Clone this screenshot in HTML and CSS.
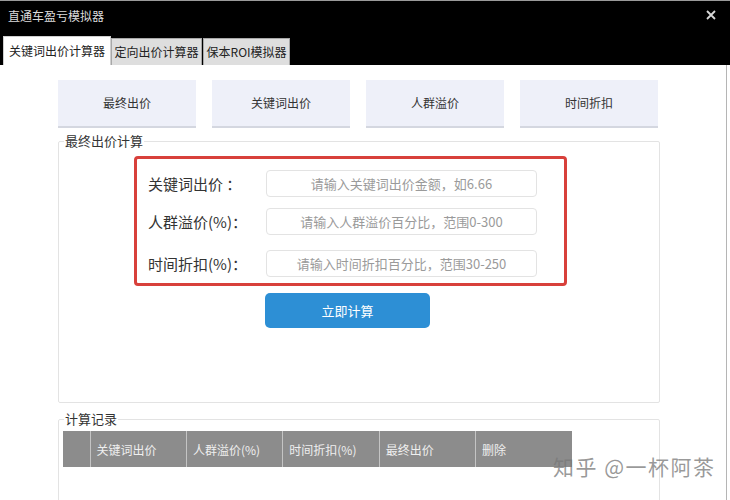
FILE: index.html
```html
<!DOCTYPE html>
<html lang="zh-CN">
<head>
  <meta charset="UTF-8">
  <title>直通车盈亏模拟器</title>
  <link rel="stylesheet" href="styles.css">
</head>
<body>
  <div class="window">
    <div class="titlebar">
      <div class="title-row">
        <span class="title">直通车盈亏模拟器</span>
        <svg class="close" width="10" height="10" viewBox="0 0 10 10">
          <path d="M1 1 L9 9 M9 1 L1 9" stroke="#d8d8d8" stroke-width="1.8"/>
        </svg>
      </div>
      <div class="tabs">
        <div class="tab active">关键词出价计算器</div>
        <div class="tab">定向出价计算器</div>
        <div class="tab">保本ROI模拟器</div>
      </div>
    </div>

    <div class="content">
      <div class="nav">
        <div class="nav-btn">最终出价</div>
        <div class="nav-btn">关键词出价</div>
        <div class="nav-btn">人群溢价</div>
        <div class="nav-btn">时间折扣</div>
      </div>

      <fieldset class="panel calc-panel">
        <legend>最终出价计算</legend>
        <div class="form-box">
          <div class="form-row">
            <label>关键词出价 ：</label>
            <input type="text" placeholder="请输入关键词出价金额，如6.66">
          </div>
          <div class="form-row">
            <label>人群溢价(%)：</label>
            <input type="text" placeholder="请输入人群溢价百分比，范围0-300">
          </div>
          <div class="form-row last">
            <label>时间折扣(%)：</label>
            <input type="text" placeholder="请输入时间折扣百分比，范围30-250">
          </div>
        </div>
        <button class="calc-btn">立即计算</button>
      </fieldset>

      <fieldset class="panel record-panel">
        <legend>计算记录</legend>
        <table class="records">
          <tr>
            <th class="idx"></th>
            <th>关键词出价</th>
            <th>人群溢价(%)</th>
            <th>时间折扣(%)</th>
            <th>最终出价</th>
            <th>删除</th>
          </tr>
        </table>
      </fieldset>
    </div>

    <div class="watermark">知乎 @一杯阿茶</div>
  </div>
</body>
</html>
```

FILE: styles.css
```css
body {
  margin: 0;
  font-family: "Noto Sans CJK SC", "Microsoft YaHei", sans-serif;
  background: #fff;
}

.window {
  position: relative;
  width: 730px;
  height: 500px;
  overflow: hidden;
}

.titlebar {
  background: #000;
  border-top: 1px solid #9a9a9a;
  height: 64px;
  display: flex;
  flex-direction: column;
}

.title-row {
  height: 34px;
  display: flex;
  align-items: center;
  justify-content: space-between;
  padding: 0 14px 0 8px;
  margin-top: -3px;
}

.title {
  color: #dcdcdc;
  font-size: 12px;
}

.tabs {
  display: flex;
  align-items: flex-end;
  padding-left: 3px;
  flex: 1;
}

.tab {
  height: 26px;
  line-height: 26px;
  padding: 0 2.5px;
  margin-left: 1px;
  font-size: 12px;
  color: #222;
  background: #dedede;
  border: 1px solid #a8a8a8;
  border-bottom: none;
}

.tab.active {
  height: 28px;
  line-height: 28px;
  padding: 0 5px;
  margin-left: 0;
  background: #fff;
  border-color: #cfcfcf;
}

.tab.active + .tab {
  margin-left: 0;
}

.content {
  width: 727px;
  height: 435px;
  border-right: 1px solid #b5b5b5;
  padding-top: 15px;
  box-sizing: border-box;
}

.nav {
  display: flex;
  gap: 16px;
  margin-left: 58px;
}

.nav-btn {
  width: 138px;
  height: 46px;
  line-height: 46px;
  text-align: center;
  font-size: 12px;
  color: #333;
  background: #eef0f9;
  border-bottom: 2px solid #d4d7e0;
}

.panel {
  margin: 0 0 0 58px;
  width: 602px;
  padding: 0;
  border: 1px solid #e3e3e3;
  border-radius: 2px;
  box-sizing: border-box;
}

.panel legend {
  font-size: 13px;
  line-height: 16px;
  color: #333;
  margin-left: 5px;
  padding: 0 1px;
}

.calc-panel {
  margin-top: 5px;
  height: 270px;
}

.form-box {
  width: 433px;
  margin: 7px 0 0 75px;
  border: 3px solid #d8403b;
  border-radius: 4px;
  padding: 11px 0 6px 11px;
  box-sizing: border-box;
  display: flex;
  flex-direction: column;
  gap: 11px;
}

.form-row {
  display: flex;
  align-items: center;
}

.form-row.last {
  margin-top: 4px;
}

.form-row label {
  width: 118px;
  font-size: 15px;
  color: #333;
}

.form-row input {
  width: 271px;
  height: 27px;
  box-sizing: border-box;
  border: 1px solid #e3e3e3;
  border-radius: 4px;
  text-align: center;
  font-family: inherit;
  font-size: 13px;
  outline: none;
}

.form-row input::placeholder {
  color: #9a9a9a;
}

.calc-btn {
  display: block;
  margin: 7px 0 0 206px;
  width: 165px;
  height: 35px;
  background: #2d8fd5;
  color: #fff;
  border: none;
  border-radius: 5px;
  font-family: inherit;
  font-size: 13px;
}

.record-panel {
  margin-top: 8px;
  height: 120px;
}

.records {
  margin: 4px 0 0 4px;
  width: 509px;
  table-layout: fixed;
  border-collapse: collapse;
}

.records th {
  height: 36px;
  padding: 0 0 0 6px;
  box-sizing: border-box;
  background: #8c8c8c;
  color: #efefef;
  font-size: 12px;
  font-weight: normal;
  text-align: left;
  border-left: 1px solid #c4c4c4;
}

.records th.idx {
  width: 27px;
  border-left: none;
}

.watermark {
  position: absolute;
  left: 553px;
  top: 451px;
  font-size: 21px;
  color: rgba(120, 120, 120, 0.75);
  letter-spacing: 1.5px;
}
```
